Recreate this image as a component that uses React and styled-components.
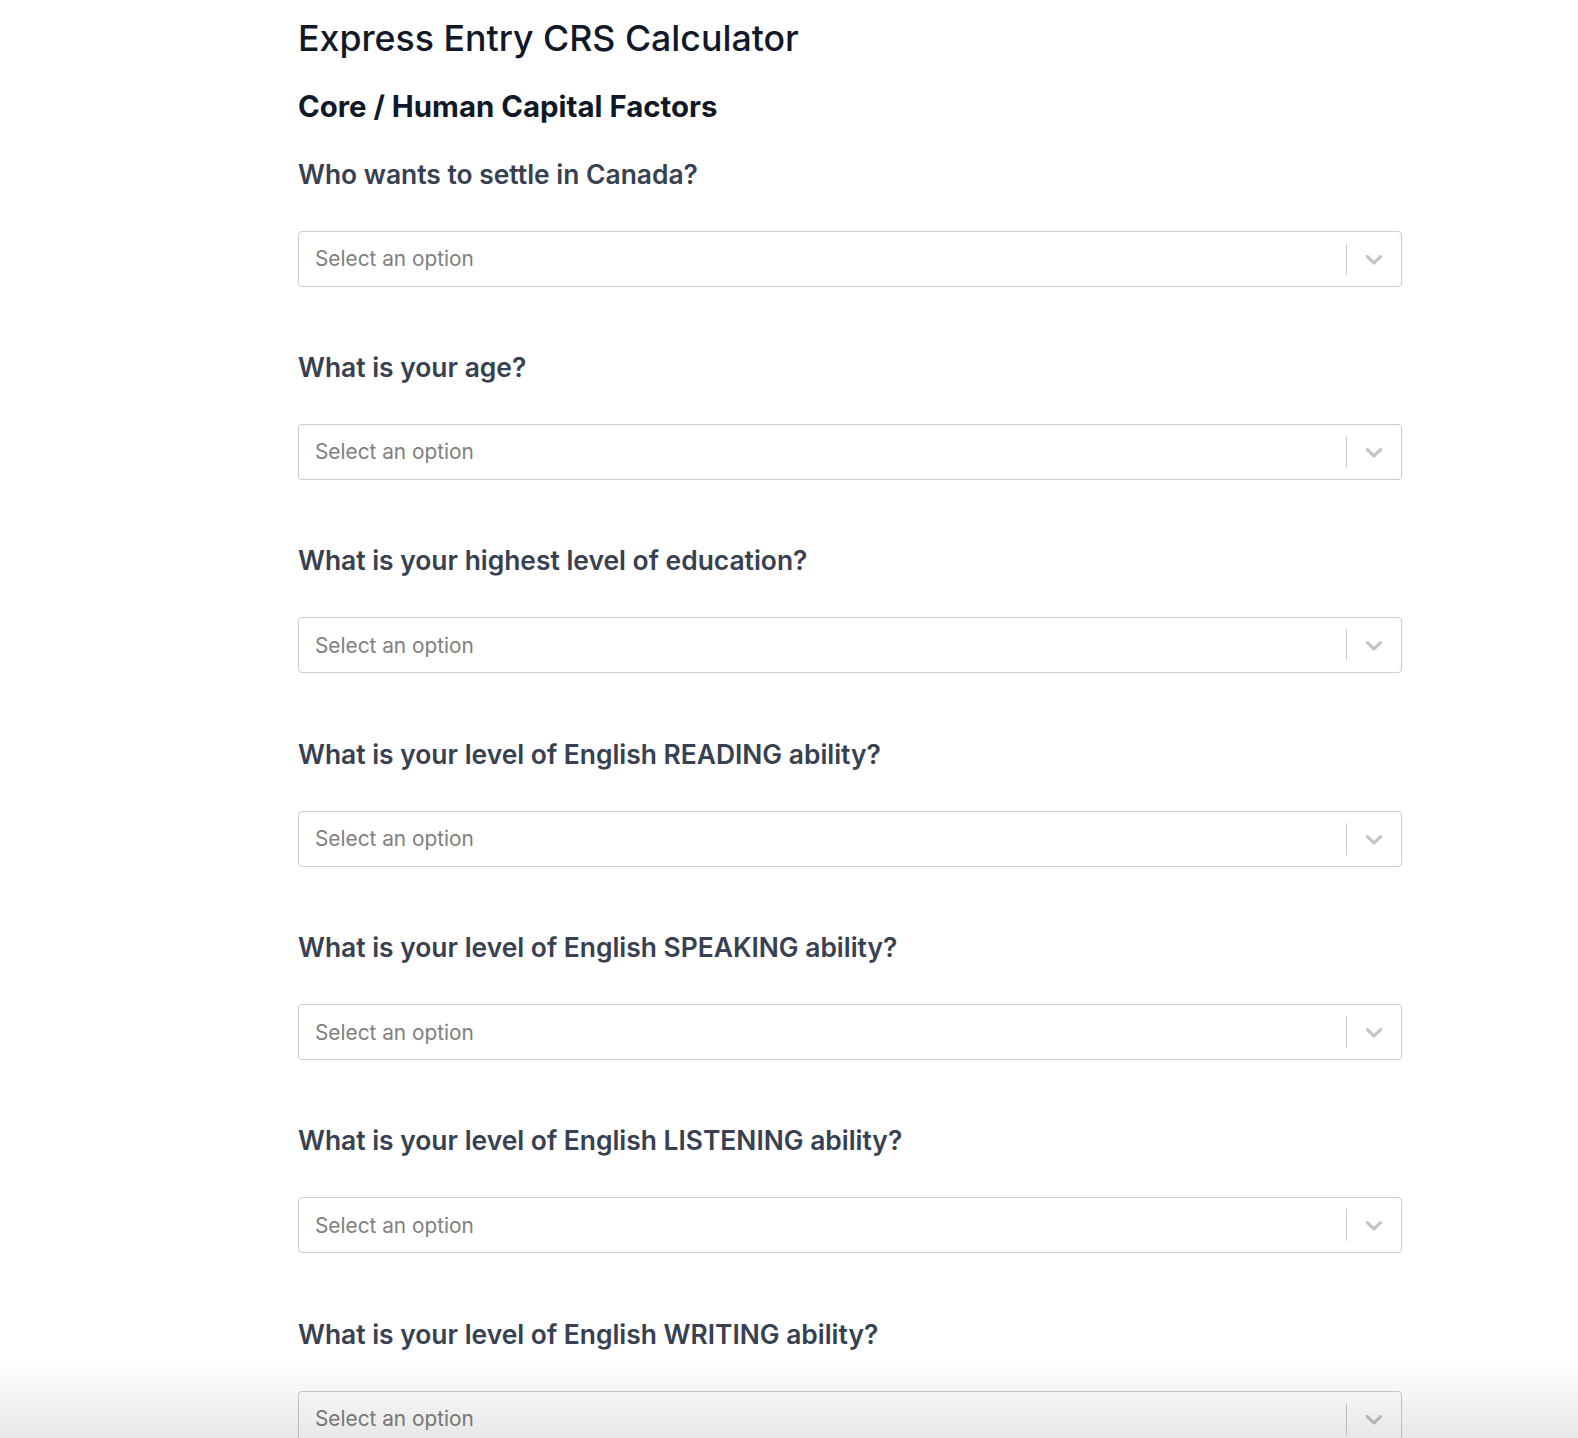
import styled, { createGlobalStyle } from "styled-components";

const GlobalStyle = createGlobalStyle`
  body {
    margin: 0;
    background: #ffffff;
    font-family: Inter, "Noto Sans", sans-serif;
    -webkit-font-smoothing: antialiased;
  }
`;

const Page = styled.div`
  padding: 18px 0 0 298px;
`;

const Wrapper = styled.div`
  width: 1104px;
`;

const Title = styled.h1`
  margin: 0;
  font-size: 35.7px;
  line-height: 40px;
  font-weight: 500;
  color: #111827;
`;

const Subtitle = styled.h2`
  margin: 31px 0 0;
  font-size: 29.4px;
  line-height: 36px;
  font-weight: 700;
  color: #111827;
`;

const Question = styled.div`
  margin-top: ${(p) => (p.first ? "31.5px" : "63.4px")};
`;

const Label = styled.h3`
  margin: 0 0 40px;
  font-size: 26.4px;
  line-height: 34px;
  font-weight: 600;
  color: #374151;
`;

const Select = styled.div`
  height: 56px;
  box-sizing: border-box;
  border: 1px solid #cccccc;
  border-radius: 4px;
  background: #ffffff;
  display: flex;
  align-items: center;
  cursor: default;
`;

const Placeholder = styled.span`
  flex: 1;
  padding-left: 16px;
  font-size: 20.8px;
  color: #808080;
`;

const Separator = styled.span`
  width: 1px;
  align-self: stretch;
  margin: 11px 0;
  background: #cccccc;
`;

const Indicator = styled.span`
  display: flex;
  align-items: center;
  justify-content: center;
  width: 54px;
  color: #c4c4c4;
`;

const BottomFade = styled.div`
  position: fixed;
  left: 0;
  right: 0;
  bottom: 0;
  height: 80px;
  pointer-events: none;
  background: linear-gradient(to bottom, rgba(0, 0, 0, 0), rgba(0, 0, 0, 0.09));
`;

const Chevron = () => (
  <svg width="28" height="28" viewBox="0 0 20 20" fill="currentColor">
    <path d="M4.516 7.548c0.436-0.446 1.043-0.481 1.576 0l3.908 3.747 3.908-3.747c0.533-0.481 1.141-0.446 1.574 0 0.436 0.445 0.408 1.197 0 1.615-0.406 0.418-4.695 4.502-4.695 4.502-0.217 0.223-0.502 0.335-0.787 0.335s-0.57-0.112-0.789-0.335c0 0-4.287-4.084-4.695-4.502s-0.436-1.170 0-1.615z" />
  </svg>
);

const questions = [
  "Who wants to settle in Canada?",
  "What is your age?",
  "What is your highest level of education?",
  "What is your level of English READING ability?",
  "What is your level of English SPEAKING ability?",
  "What is your level of English LISTENING ability?",
  "What is your level of English WRITING ability?",
];

const App = () => {
  return (
    <Page>
      <GlobalStyle />
      <Wrapper>
        <Title>Express Entry CRS Calculator</Title>
        <Subtitle>Core / Human Capital Factors</Subtitle>
        {questions.map((q, i) => (
          <Question key={q} first={i === 0}>
            <Label>{q}</Label>
            <Select>
              <Placeholder>Select an option</Placeholder>
              <Separator />
              <Indicator>
                <Chevron />
              </Indicator>
            </Select>
          </Question>
        ))}
      </Wrapper>
      <BottomFade />
    </Page>
  );
};

export default App;
